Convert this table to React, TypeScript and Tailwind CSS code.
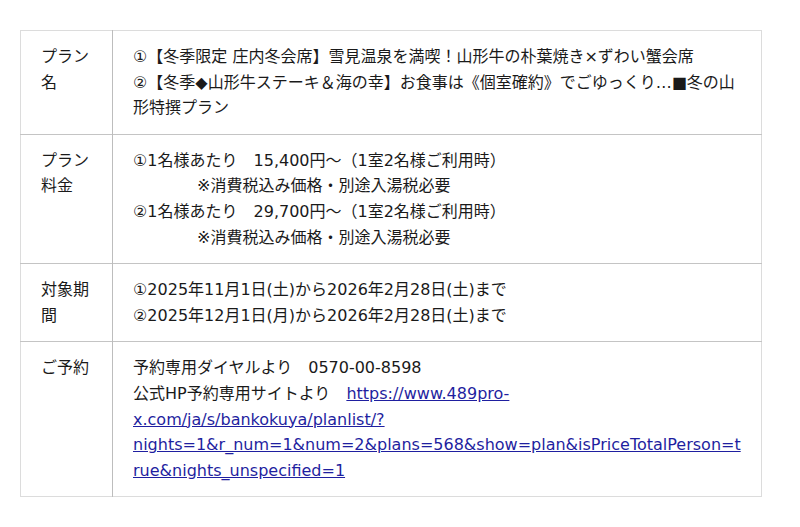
export default function App() {
  const rows: { label: string; content: React.ReactNode }[] = [
    {
      label: "プラン名",
      content: (
        <>
          <p>①【冬季限定 庄内冬会席】雪見温泉を満喫！山形牛の朴葉焼き×ずわい蟹会席</p>
          <p>②【冬季◆山形牛ステーキ＆海の幸】お食事は《個室確約》でごゆっくり…■冬の山形特撰プラン</p>
        </>
      ),
    },
    {
      label: "プラン料金",
      content: (
        <>
          <p>①1名様あたり　15,400円～（1室2名様ご利用時）</p>
          <p>　　　　※消費税込み価格・別途入湯税必要</p>
          <p>②1名様あたり　29,700円～（1室2名様ご利用時）</p>
          <p>　　　　※消費税込み価格・別途入湯税必要</p>
        </>
      ),
    },
    {
      label: "対象期間",
      content: (
        <>
          <p>①2025年11月1日(土)から2026年2月28日(土)まで</p>
          <p>②2025年12月1日(月)から2026年2月28日(土)まで</p>
        </>
      ),
    },
    {
      label: "ご予約",
      content: (
        <>
          <p>予約専用ダイヤルより　0570-00-8598</p>
          <p className="break-words">
            {"公式HP予約専用サイトより　"}
            <a href="#" className="text-[#1f1fa0] underline">
              https://www.489pro-x.com/ja/s/bankokuya/planlist/?nights=1&amp;r_num=1&amp;num=2&amp;plans=568&amp;show=plan&amp;isPriceTotalPerson=true&amp;nights_unspecified=1
            </a>
          </p>
        </>
      ),
    },
  ];

  return (
    <div className="min-h-screen bg-white px-5 pt-[30px] font-['DejaVu_Sans','Noto_Sans_CJK_JP',sans-serif] text-[16px] leading-[1.6] text-[#1a1a1a]">
      <table className="w-[742px] table-fixed border-collapse border border-[#dcdcdc]">
        <colgroup>
          <col className="w-[92px]" />
          <col />
        </colgroup>
        <tbody>
          {rows.map((row) => (
            <tr key={row.label} className="border-b border-[#c4c4c4] last:border-[#dcdcdc]">
              <td className="border-r border-[#bdbdbd] px-5 py-[13px] align-top">{row.label}</td>
              <td className="px-5 py-[13px] align-top break-words">{row.content}</td>
            </tr>
          ))}
        </tbody>
      </table>
    </div>
  );
}
